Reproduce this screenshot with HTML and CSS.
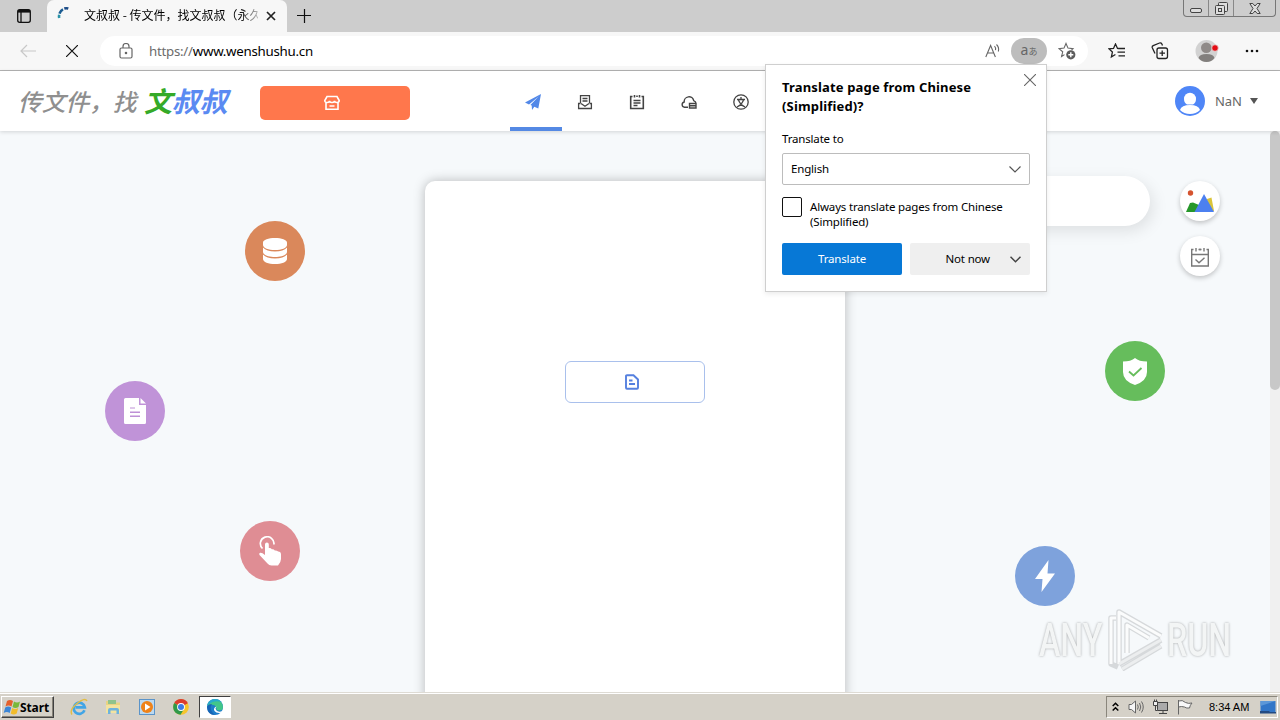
FILE: index.html
```html
<!DOCTYPE html>
<html lang="zh-CN">
<head>
    <meta charset="UTF-8">
    <meta name="viewport" content="width=device-width, initial-scale=1.0">
    <title>文叔叔 - 传文件，找文叔叔（永久</title>
    <link rel="stylesheet" href="styles.css">
</head>
<body>

    <!-- tab strip -->
    <div class="tabbar">
        <div class="tab-menu">
            <svg width="16" height="16" viewBox="0 0 16 16" fill="none" stroke="#111" stroke-width="1.3"><rect x="1.7" y="1.7" width="12.6" height="12.6" rx="2"/><path d="M2 3.300h12" stroke-width="2.600"/><path d="M5 4v10" stroke-width="1.300"/></svg>
        </div>
        <div class="tab">
            <svg class="spinner" width="16" height="16" viewBox="0 0 16 16" fill="none" stroke-width="2.600"><path d="M2.200 12A6.500 6.500 0 0 1 2.200 8.800" stroke="#2a93a8"/><path d="M2.500 7.600A6.500 6.500 0 0 1 6 3.300" stroke="#1b5c92"/><path d="M7.300 2.600q2-.6 4 0" stroke="#194a86"/></svg>
            <span class="tab-title">文叔叔 - 传文件，找文叔叔（永久</span>
            <svg width="10" height="10" viewBox="0 0 10 10" stroke="#222" stroke-width="1.7"><path d="M1 1l8 8M9 1l-8 8"/></svg>
        </div>
        <svg class="new-tab" width="14" height="14" viewBox="0 0 14 14" stroke="#111" stroke-width="1.2"><path d="M0 6.500h14M7.500 0v14"/></svg>
        <div class="window-buttons">
            <span class="wb"><svg width="12" height="5" viewBox="0 0 12 5"><rect x=".5" y=".5" width="11" height="4" rx="1.5" fill="#ddd" stroke="#444"/></svg></span>
            <span class="wb"><svg width="13" height="13" viewBox="0 0 13 13" fill="#ddd" stroke="#444"><rect x="3.5" y=".5" width="9" height="9" rx="1"/><rect x=".5" y="3.5" width="9" height="9" rx="1"/><rect x="3.500" y="6.500" width="3" height="3"/></svg></span>
            <span class="wb wb-close"><svg width="12" height="11" viewBox="0 0 12 11" fill="#ddd" stroke="#444"><path d="M.8.5h3L6 3 8.200.5h3L8 5.500l3.200 5H8.200L6 8 3.800 10.500h-3L4 5.500z"/></svg></span>
        </div>
    </div>

    <!-- address bar -->
    <div class="toolbar">
        <svg class="back" width="16" height="14" viewBox="0 0 16 14" fill="none" stroke="#c8c8c8" stroke-width="1.2"><path d="M16 7H1M7 1L1 7l6 6"/></svg>
        <svg class="stop" width="12" height="12" viewBox="0 0 12 12" stroke="#111" stroke-width="1.200"><path d="M0 0l12 12M12 0L0 12"/></svg>
        <div class="address">
            <svg class="lock" width="14" height="16" viewBox="0 0 14 16" fill="none" stroke="#666" stroke-width="1.2"><rect x="1" y="5" width="12" height="10" rx="1.500"/><path d="M4 5V3.500a3 3 0 0 1 6 0V5"/><circle cx="7" cy="10" r=".7" fill="#666"/></svg>
            <span class="url"><span class="scheme">https://</span>www.wenshushu.cn</span>
            <svg class="read" width="16" height="16" viewBox="0 0 16 16" fill="none" stroke="#666" stroke-width="1.1"><path d="M.8 14L5.600 2.500 10.400 14M2.600 10h6M9.500 3.200q1.600 1.700 1 4M11.500 1.500q3 3 1.800 7"/></svg>
            <span class="translate-badge"><span class="la">a</span><span class="ja">あ</span></span>
            <svg class="star" width="18" height="18" viewBox="0 0 18 18" fill="none" stroke="#666" stroke-width="1.1"><path d="M6.500 12.600L3.600 14.500l1.100-4.700L1 6.600l5-.5L8 1.500l2 4.600 5 .5-1.500 1.400"/><circle cx="12.800" cy="12.800" r="4.600" fill="#5c5c5c" stroke="none"/><path d="M10.300 12.800h5M12.800 10.300v5" stroke="#fff" stroke-width="1.400"/></svg>
        </div>
        <svg class="tool-fav" width="18" height="16" viewBox="0 0 18 16" fill="none" stroke="#222" stroke-width="1.300"><path d="M10.500 5.500l-1-.1L7.500 1 5.500 5.400 1 5.900l3.400 3.200-1 4.900 4-2.500M10.500 5.500H17M9.500 9.200H17M10.500 12.900H17"/></svg>
        <svg class="tool-col" width="18" height="18" viewBox="0 0 18 18" fill="none" stroke="#222" stroke-width="1.300"><rect x="6" y="6" width="10.500" height="10.500" rx="2"/><path d="M8.500 11.200h5.500M11.200 8.500V14M4 11.500L1.300 5.800Q.8 4.300 2.200 3.600L8.500 1q1.600-.5 2.400 1l.6 1.500"/></svg>
        <svg class="tool-user" width="24" height="24" viewBox="0 0 24 24"><circle cx="11.500" cy="12" r="11" fill="#d2d2d2"/><circle cx="11.300" cy="8.800" r="5.300" fill="#8f8a88"/><path d="M3.500 19q1-4 8-4t8 4q-3 4-8 4t-8-4z" fill="#827f7d"/><circle cx="20" cy="9" r="3.300" fill="#e30c14" stroke="#e8d8d8" stroke-width=".8"/></svg>
        <svg class="tool-more" width="14" height="4" viewBox="0 0 14 4" fill="#111"><circle cx="2" cy="2" r="1.300"/><circle cx="7" cy="2" r="1.300"/><circle cx="12" cy="2" r="1.300"/></svg>
    </div>

    <!-- page -->
    <div class="viewport">
        <header class="header">
            <div class="logo"><span class="slogan">传文件，找</span><span class="brand"><span class="green">文</span>叔叔</span></div>
            <div class="shop">
                <svg width="16" height="16" viewBox="0 0 16 16" fill="none" stroke="#fff" stroke-width="1.600"><path d="M3 1.500h10l2.200 4q0 2-2.300 2T10.500 5.800Q10.500 7.500 8 7.500T5.500 5.800Q5.500 7.500 3.100 7.500t-2.300-2zM2 7.500v6.700h12V7.500M5.500 11h5"/></svg>
            </div>
            <nav class="nav">
                <a class="nav-item active"><svg width="16" height="16" viewBox="0 0 16 16" fill="#5288e8"><path d="M16 0L0 8.600l4 1.800L13 3zM16 0L5.400 11l1.300.6L7 16l2.300-3.200 4 1.600z"/></svg></a>
                <a class="nav-item"><svg width="16" height="16" viewBox="0 0 16 16" fill="none" stroke="#444" stroke-width="1.300"><path d="M3.500 9V1.600h9V9M5.500 4.500h5M5.500 7h5M3.500 9.500H1.600v5h12.800v-5h-1.900M4 9.500L8 12.200l4-2.700"/></svg></a>
                <a class="nav-item"><svg width="16" height="16" viewBox="0 0 16 16" fill="none" stroke="#444" stroke-width="1.600"><path d="M3.500 2.500H1.700v12h12.600v-12h-1.800M5.500 1v2.500M8 1.500v1.500M10.500 1v2.500M4.500 6.500h7M4.500 9h7M4.500 11.500h4" /></svg></a>
                <a class="nav-item"><svg width="16" height="16" viewBox="0 0 16 16" fill="none" stroke="#444" stroke-width="1.400"><path d="M7 13.300H3.500A2.700 2.700 0 0 1 3.200 8a4.800 4.800 0 0 1 9.500-1.300q2.300.8 2.400 3.300M8.500 9.500v4.500h6.500V9.500zM8.500 11.800h6.500"/></svg></a>
                <a class="nav-item"><svg width="16" height="16" viewBox="0 0 16 16" fill="none" stroke="#444" stroke-width="1.300"><circle cx="8" cy="8" r="7.200"/><path d="M4 5.500h8M8 3v2.500M5.500 6q1.500 4.500 6.500 7M10.500 6Q9 10.500 4 13"/></svg></a>
            </nav>
            <div class="account">
                <svg width="30" height="30" viewBox="0 0 30 30"><circle cx="15" cy="15" r="15" fill="#4f86f7"/><path d="M9 13a6 6.300 0 0 1 12 0q0 3.500-3 5.500h-6q-3-2-3-5.500z" fill="#fff"/><path d="M5 24q1.500-5 10-5t10 5q-4 4-10 4t-10-4z" fill="#fff"/></svg>
                <span class="user-name">NaN</span>
                <svg width="8" height="6" viewBox="0 0 8 6" fill="#555"><path d="M0 0h8L4 6z"/></svg>
            </div>
        </header>

        <div class="page-body">
            <main class="main">
                <div class="card">
                    <div class="file-btn">
                        <svg width="16" height="16" viewBox="0 0 16 16" fill="none" stroke="#5580df" stroke-width="1.900"><path d="M3 1.200h6.500L14 5.500v8.300q0 1-1 1H3q-1 0-1-1V2.200q0-1 1-1zM5 6.500h3.500M5 10h6"/></svg>
                    </div>
                </div>
                <div class="notice"></div>
                <div class="side">
                    <div class="side-btn"><svg width="28" height="24" viewBox="0 0 28 24"><circle cx="4.500" cy="3" r="2.700" fill="#d5532f"/><path d="M21 9l4.500-1.500L28 21h-6z" fill="#dac43a"/><path d="M0 22l4-9 3-.5 6 2.500v7z" fill="#26972a"/><path d="M8.500 22L18 4l10 18z" fill="#4c80f0"/></svg></div>
                    <div class="side-btn"><svg width="20" height="20" viewBox="0 0 20 20" fill="none" stroke="#777" stroke-width="1.400"><path d="M3.500 2.500H1.700V19h16.600V2.500h-1.800M2 7.500h16M6 1v3.500M14 1v3.500M8.500 2.500h3M10 1.500v2M5.500 12.500l3.500 3.200 5.500-5"/></svg></div>
                </div>

                <div class="bubble database"><svg width="26" height="28" viewBox="0 0 26 28" fill="#fff"><path d="M1 5.500C1 3 6.500 1 13 1s12 2 12 4.500V8c0 3-5.500 5-12 5S1 11 1 8zM1 10.500q3.500 4 12 4t12-4V15c0 3-5.500 5-12 5S1 18 1 15zM1 17.500q3.500 4 12 4t12-4V22c0 3-5.500 5-12 5S1 25 1 22z"/></svg></div>
                <div class="bubble document"><svg width="22" height="26" viewBox="0 0 22 26"><path d="M1.500 0H15v7h7v17.500q0 1.500-1.500 1.500h-19Q0 26 0 24.500v-23Q0 0 1.500 0zM16.500 0L22 5.500h-5.500z" fill="#fff"/><path d="M6 10h5" stroke="#be90d6" stroke-width="1"/><path d="M6 14.300h10M6 18.300h10" stroke="#be90d6" stroke-width="1.600"/></svg></div>
                <div class="bubble touch"><svg width="22" height="30" viewBox="0 0 22 30" fill="#fff"><path d="M3.500 12.500A6.800 6.800 0 1 1 14.900 8.500" fill="none" stroke="#fff" stroke-width="1.700"/><path d="M6 8.500q0-2 1.900-2t1.900 2V12q2-.5 3 1.300 2-.5 3 1.200 2-.3 3.300 1 2.900 0 2.900 3v4.500q0 3-3 6.500h-6.500q-2.500 0-4-2L.5 19q-.8-2 .8-2.300T6 19z"/></svg></div>
                <div class="bubble shield"><svg width="24" height="27" viewBox="0 0 24 27"><path d="M12 0q4 3.500 12 3.500V14q0 9-12 13Q0 23 0 14V3.500Q8 3.500 12 0z" fill="#fff"/><path d="M6 13.500l4.500 4 8-7.500" fill="none" stroke="#66bd5c" stroke-width="1.800"/></svg></div>
                <div class="bubble flash"><svg width="20" height="32" viewBox="0 0 20 32" fill="#fff"><path d="M13.500 0L0 19h7.500L6.500 32 20 13.500h-7.500z"/></svg></div>
            </main>
            <div class="scrollbar"><div class="thumb"></div></div>
        </div>
    </div>

    <!-- taskbar -->
    <div class="taskbar">
        <div class="start">
            <svg width="17" height="16" viewBox="0 0 17 16"><path d="M4 2q3-2 6 0L8.500 7.500q-3-2-6 0z" fill="#e5602b"/><path d="M11 2.500q3 2 6 0L15.500 8q-3 2-6 0z" fill="#79b83a"/><path d="M2.200 8.500q3-2 6 0L6.700 14q-3-2-6 0z" fill="#3c86d6"/><path d="M9.200 9q3 2 6 0L13.700 14.500q-3 2-6 0z" fill="#f2bc2a"/></svg>
            <span>Start</span>
        </div>
        <div class="quick">
            <svg width="18" height="18" viewBox="0 0 18 18" fill="none"><path d="M14.500 12.300A5.600 5.600 0 1 1 14.800 9.300H5.500" stroke="#41a5e6" stroke-width="2.700"/><path d="M2 16.500Q-1 12 7 5.500T17 3" stroke="#e2bd45" stroke-width="1.400"/></svg>
            <svg width="18" height="18" viewBox="0 0 18 18"><path d="M2 3h5l1 1.500h8V15H2z" fill="#e9d382"/><path d="M4 2h8v4H4z" fill="#8fc38c"/><path d="M2 7h14v8H2z" fill="#f3e3a0"/><path d="M4 16v-4q0-2 2-2h7q2 0 2 2v4h-2.500v-3.500h-6V16z" fill="#6eb3dd"/></svg>
            <svg width="18" height="18" viewBox="0 0 18 18"><rect x="1.500" y="1.500" width="15" height="15" fill="#bcd9f0" stroke="#5b94c9"/><circle cx="9" cy="9" r="6" fill="#ef8218"/><path d="M7 5.500l5.500 3.500L7 12.500z" fill="#fff"/></svg>
            <svg width="18" height="18" viewBox="0 0 18 18"><circle cx="9" cy="9" r="7.800" fill="#f6c52c"/><path d="M9 9L2.200 5.100A7.800 7.800 0 0 1 15.800 5.100z" fill="#dc3d2e"/><path d="M9 9L2.200 5.100A7.800 7.800 0 0 0 8.500 16.800L12 11z" fill="#30994a"/><path d="M9 5.100h6.800L9 9z" fill="#dc3d2e"/><circle cx="9" cy="9" r="3.900" fill="#fff"/><circle cx="9" cy="9" r="3" fill="#3e7ce6"/></svg>
            <span class="task-active"><svg width="18" height="18" viewBox="0 0 18 18"><circle cx="9" cy="9" r="8" fill="#1d7dcb"/><path d="M1.200 7.500A8 8 0 0 1 17 9q0 3.500-4 3.500-3.300 0-2.500-2.500Q9 5 1.200 7.500z" fill="#42c68a"/><path d="M1.200 7.500A8 8 0 0 1 9 1q4 0 6.500 3Q8 1.500 1.200 7.500z" fill="#27a9cf"/><path d="M10.500 8.500q-1.800 1.500-.3 3.700 2 2.300 6 1l-1 1.500q-4.700.8-6.700-1.700-1.700-3 2-4.500z" fill="#fff"/><path d="M1 9q1-3 5-3Q3 10 6.500 14.500L9 17Q1.500 17 1 9z" fill="#1765b5"/></svg></span>
        </div>
        <div class="tray">
            <svg width="7" height="10" viewBox="0 0 7 10" fill="none" stroke="#000" stroke-width="1.500"><path d="M.7 4l2.800-2.800L6.300 4M.7 8.500l2.800-2.800 2.800 2.800"/></svg>
            <svg class="sound" width="17" height="14" viewBox="0 0 17 14" fill="#f6f6f6" stroke="#666"><path d="M1 4.500h2.500L7.500 1v12l-4-3.500H1z"/><path d="M9.500 4.500q1.500 2.500 0 5M11.500 3q2.500 4 0 8M13.500 1.500q3.500 5.500 0 11" fill="none"/></svg>
            <svg class="network" width="17" height="16" viewBox="0 0 17 16" fill="none" stroke="#444"><rect x="4.500" y="3.500" width="10" height="8" fill="#aaa"/><path d="M6 14.500h8M10 11.500v3"/><path d="M.5 2.500v4h4v-4zM2.500 6.500v5h2M1.500.5v2M3.500.5v2" fill="#eee"/></svg>
            <svg class="flag" width="16" height="16" viewBox="0 0 16 16" fill="#f8f8f8" stroke="#666"><path d="M1.500 1v14.500M1.500 2q4-1.500 7 1.500 3 1.500 6.500.5-2 2-2.500 5-3 .5-5-1-3-1-6 0z"/></svg>
            <span class="clock">8:34 AM</span>
            <svg class="desktop" width="16" height="14" viewBox="0 0 16 14"><path d="M.5 1h15v11H.5z" fill="#3276c8"/><path d="M.5 1h15L.5 6z" fill="#5c97d8"/><path d="M0 11h9l1 1h6v1.500H0z" fill="#234a82"/></svg>
        </div>
    </div>

    <!-- translate prompt -->
    <div class="popup">
        <svg class="popup-close" width="12" height="12" viewBox="0 0 12 12" stroke="#666" stroke-width="1.100"><path d="M0 0l12 12M12 0L0 12"/></svg>
        <h2>Translate page from Chinese<br>(Simplified)?</h2>
        <div class="popup-label">Translate to</div>
        <div class="select"><span>English</span><svg width="12" height="7" viewBox="0 0 12 7" fill="none" stroke="#555" stroke-width="1.200"><path d="M.5.500L6 6 11.500.5"/></svg></div>
        <div class="always"><span class="checkbox"></span><span>Always translate pages from Chinese<br>(Simplified)</span></div>
        <div class="popup-actions">
            <div class="popup-btn primary"><span>Translate</span></div>
            <div class="popup-btn secondary"><span>Not now</span><svg width="11" height="7" viewBox="0 0 11 7" fill="none" stroke="#444" stroke-width="1.500"><path d="M.5.800L5.500 5.800 10.500.8"/></svg></div>
        </div>
    </div>

    <div class="watermark">
        <span class="wm-any">ANY</span>
        <svg width="58" height="62" viewBox="0 0 58 62" fill="none" stroke-linejoin="round"><g stroke="#d6d9db" stroke-width="5.500"><path d="M9 9H4v46l7 3M12 55V3l42 24M12 55l42-24M20 44V16l22 13M15 60l39-23"/></g><g stroke="#fbfcfc" stroke-width="3"><path d="M9 9H4v46M12 55V3l42 24"/><path d="M20 44V16l22 13"/></g><g stroke="#eceeef" stroke-width="3"><path d="M12 55l42-24M15 60l39-23"/></g></svg>
        <span class="wm-run">RUN</span>
    </div>

</body>
</html>
```
FILE: styles.css
```css
* {
    box-sizing: border-box;
}
body {
    margin: 0;
    width: 1280px;
    height: 720px;
    overflow: hidden;
    position: relative;
    display: flex;
    flex-direction: column;
    font-family: "Noto Sans", "Noto Sans CJK SC", sans-serif;
    font-size: 12px;
    color: #000;
    background: #f7f9fa;
}
svg {
    display: block;
    flex: none;
}

/* tab strip */
.tabbar {
    height: 32px;
    flex: none;
    display: flex;
    background: #cdcdcd;
}
.tab-menu {
    width: 47px;
    padding: 8px 0 0 16px;
}
.tab {
    width: 240px;
    height: 32px;
    display: flex;
    align-items: center;
    padding: 0 11px 0 10px;
    background: #f7f7f7;
    border-radius: 7px 7px 0 0;
}
.spinner {
    margin: -4px 11px 0 0;
}
.tab-title {
    width: 174px;
    margin: -3px 8px 0 0;
    overflow: hidden;
    white-space: nowrap;
    font-family: "Noto Sans CJK SC", sans-serif;
    -webkit-mask-image: linear-gradient(to right, #000 155px, transparent 180px);
    mask-image: linear-gradient(to right, #000 155px, transparent 180px);
}
.new-tab {
    margin: 9px 0 0 10px;
}
.window-buttons {
    display: flex;
    height: 17px;
    margin: 0 4px 0 auto;
    border: 1px solid #777;
    border-top: none;
    border-radius: 0 0 4px 4px;
}
.wb {
    width: 25px;
    display: flex;
    justify-content: center;
    align-items: center;
    border-right: 1px solid #888;
}
.wb:first-child {
    padding-top: 4px;
}
.wb-close {
    width: 41px;
    border-right: none;
}

/* toolbar */
.toolbar {
    height: 39px;
    flex: none;
    display: flex;
    align-items: center;
    padding-left: 20px;
    background: #f7f7f7;
    border-bottom: 1px solid #b4b4b4;
}
.stop {
    margin: 0 28px 0 30px;
}
.address {
    width: 988px;
    height: 30px;
    margin-left: -6px;
    display: flex;
    align-items: center;
    padding-left: 19px;
    background: #fff;
    border-radius: 15px;
}
.url {
    width: 852px;
    padding-left: 16px;
    font-size: 13.3px;
    letter-spacing: -0.26px;
}
.scheme {
    color: #6b6b6b;
}
.translate-badge {
    width: 36px;
    height: 26px;
    margin: 0 11px 0 10px;
    display: flex;
    justify-content: center;
    align-items: center;
    background: #bdbdbd;
    border-radius: 13px;
    color: #666;
}
.la {
    font-size: 14px;
    line-height: 16px;
    margin-top: -3px;
}
.ja {
    font-family: "Noto Sans CJK JP", sans-serif;
    font-size: 9px;
}
.tool-fav {
    margin-left: 20px;
}
.tool-col {
    margin-left: 25px;
}
.tool-user {
    margin-left: 26px;
}
.tool-more {
    margin-left: 26px;
}

/* site header */
.viewport {
    height: 621px;
    flex: none;
    display: flex;
    flex-direction: column;
}
.header {
    height: 60px;
    flex: none;
    display: flex;
    align-items: center;
    padding: 0 22px 0 19px;
    background: #fff;
    box-shadow: 0 1px 4px rgba(0, 0, 0, 0.15);
    position: relative;
    z-index: 1;
}
.logo {
    width: 241px;
    display: flex;
    align-items: center;
    font-family: "Noto Sans CJK SC", sans-serif;
    font-style: italic;
    font-weight: bold;
    white-space: nowrap;
}
.slogan {
    width: 126px;
    margin-left: -1px;
    font-size: 23.7px;
    font-weight: 500;
    line-height: 36px;
    color: #8f8f8f;
}
.brand {
    margin-top: -2px;
    font-size: 28px;
    line-height: 36px;
    letter-spacing: -0.3px;
    color: #5a8af2;
}
.green {
    color: #35aa28;
}
.shop {
    width: 150px;
    height: 34px;
    margin-top: 4px;
    display: flex;
    justify-content: center;
    align-items: center;
    padding-right: 6px;
    background: #ff774c;
    border-radius: 5px;
}
.nav {
    display: flex;
    margin-left: 100px;
}
.nav-item {
    width: 52px;
    height: 60px;
    display: flex;
    justify-content: center;
    align-items: center;
    padding: 6px 6px 0 0;
    border-bottom: 4px solid transparent;
}
.nav-item.active {
    border-bottom-color: #5489e4;
}
.account {
    margin-left: auto;
    display: flex;
    align-items: center;
}
.user-name {
    margin: 0 8px 0 10px;
    font-size: 13px;
    color: #666;
}

/* site body */
.page-body {
    flex: 1;
    display: flex;
    overflow: hidden;
}
.main {
    width: 1270px;
    position: relative;
    padding-top: 50px;
    background: #f6f9fb;
}
.card {
    width: 420px;
    height: 560px;
    margin: 0 auto;
    padding-top: 180px;
    background: #fff;
    border-radius: 10px;
    box-shadow: 0 0 12px rgba(0, 0, 0, 0.26);
}
.file-btn {
    width: 140px;
    height: 42px;
    margin: 0 auto;
    display: flex;
    justify-content: center;
    align-items: center;
    padding-right: 6px;
    border: 1px solid #a9c0ec;
    border-radius: 6px;
}
.notice {
    position: absolute;
    top: 45px;
    right: 120px;
    width: 260px;
    height: 50px;
    background: #fff;
    border-radius: 25px;
    box-shadow: 3px 5px 16px rgba(0, 0, 0, 0.1);
}
.side {
    position: absolute;
    top: 50px;
    right: 50px;
    display: flex;
    flex-direction: column;
    gap: 15px;
}
.side-btn {
    width: 40px;
    height: 40px;
    display: flex;
    justify-content: center;
    align-items: center;
    padding-top: 2px;
    background: #fff;
    border-radius: 50%;
    box-shadow: 0 2px 5px rgba(0, 0, 0, 0.22);
}
.bubble {
    position: absolute;
    width: 60px;
    height: 60px;
    display: flex;
    justify-content: center;
    align-items: center;
    border-radius: 50%;
}
.database {
    left: 245px;
    top: 90px;
    background: #da885b;
}
.document {
    left: 105px;
    top: 250px;
    background: #c093d8;
}
.touch {
    left: 240px;
    top: 390px;
    background: #df8d94;
}
.shield {
    left: 1105px;
    top: 210px;
    background: #66bd5c;
}
.flash {
    left: 1015px;
    top: 415px;
    background: #7ea2dc;
}
.scrollbar {
    width: 10px;
    background: #f0f0f0;
}
.thumb {
    height: 259px;
    background: #c8c8c8;
    border-radius: 5px;
}

/* taskbar */
.taskbar {
    height: 28px;
    flex: none;
    display: flex;
    align-items: center;
    padding: 1px 2px 0 1px;
    background: #d5d1c8;
    border-top: 1px solid #dedbd4;
    box-shadow: inset 0 1px 0 #fff;
}
.start {
    width: 53px;
    height: 22px;
    display: flex;
    align-items: center;
    padding-left: 1px;
    background: #d5d1c8;
    border: 1px solid;
    border-color: #fff #404040 #404040 #fff;
    box-shadow: inset -1px -1px 0 #868278;
    font-size: 12px;
    font-weight: bold;
    letter-spacing: -0.1px;
}
.quick {
    display: flex;
    align-items: center;
    gap: 16px;
    margin-left: 16px;
}
.task-active {
    width: 32px;
    height: 22px;
    margin-left: -7px;
    display: flex;
    justify-content: center;
    align-items: center;
    background: #fff;
    border: 1px solid;
    border-color: #404040 #fff #fff #404040;
}
.tray {
    width: 172px;
    height: 22px;
    margin-left: auto;
    display: flex;
    align-items: center;
    padding-left: 5px;
    border: 1px solid;
    border-color: #8a867c #fff #fff #8a867c;
}
.sound {
    margin-left: 9px;
}
.network {
    margin-left: 8px;
}
.flag {
    margin-left: 7px;
}
.clock {
    width: 42px;
    margin-left: 16px;
    font-family: "Liberation Sans", sans-serif;
    font-size: 11px;
    white-space: nowrap;
}
.desktop {
    margin-left: 9px;
}

/* translate popup */
.popup {
    position: absolute;
    z-index: 2;
    left: 765px;
    top: 64px;
    width: 282px;
    height: 228px;
    padding: 13px 16px 0;
    background: #fff;
    border: 1px solid #cfcfcf;
    box-shadow: 0 2px 5px rgba(0, 0, 0, 0.08);
    font-size: 11.5px;
    letter-spacing: -0.17px;
}
.popup-close {
    position: absolute;
    right: 10px;
    top: 9px;
}
.popup h2 {
    margin: 0;
    font-size: 13px;
    line-height: 19px;
    font-weight: bold;
    letter-spacing: 0.16px;
}
.popup-label {
    margin-top: 15px;
    line-height: 16px;
}
.select {
    height: 32px;
    margin-top: 6px;
    display: flex;
    justify-content: space-between;
    align-items: center;
    padding: 0 8px;
    border: 1px solid #bcbcbc;
    border-radius: 2px;
}
.select span,
.popup-btn span {
    padding-bottom: 2px;
}
.always {
    display: flex;
    gap: 8px;
    margin-top: 12px;
    height: 46px;
    line-height: 15px;
}
.always span:last-child {
    padding-top: 2px;
    white-space: nowrap;
}
.checkbox {
    width: 20px;
    height: 20px;
    flex: none;
    border: 1px solid #111;
    border-radius: 2px;
}
.popup-actions {
    display: flex;
    gap: 8px;
}
.popup-btn {
    width: 120px;
    height: 32px;
    display: flex;
    justify-content: center;
    align-items: center;
    border-radius: 2px;
}
.primary {
    background: #0778d6;
    color: #fff;
}
.secondary {
    justify-content: flex-end;
    gap: 20px;
    padding-right: 9px;
    background: #efefef;
}

/* watermark */
.watermark {
    position: absolute;
    left: 1039px;
    top: 609px;
    display: flex;
    align-items: center;
    font-family: "Roboto", sans-serif;
    font-size: 46px;
    font-weight: 500;
    line-height: 62px;
    color: #f3f5f5;
    text-shadow: 0 0 3px rgba(0, 0, 0, 0.35);
}
.watermark svg {
    margin: 0 2px 0 3px;
}
.wm-any,
.wm-run {
    width: 65px;
    white-space: nowrap;
    transform: scaleX(0.7);
    transform-origin: left center;
}
```
